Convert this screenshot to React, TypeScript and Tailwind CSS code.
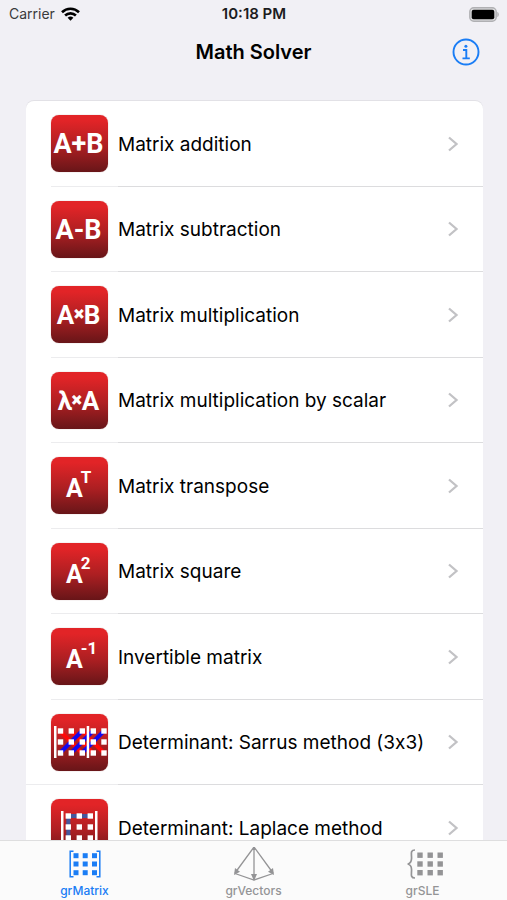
import type { ReactNode } from "react";

type Row = { label: string; art: ReactNode; fullDivider?: boolean };

const GLYPH = { fontFamily: "Roboto, sans-serif", fontWeight: 700, fill: "#fff" };

function Dots({ xs, ys, size }: { xs: number[]; ys: number[]; size: number }) {
  return (
    <>
      {ys.map((y) =>
        xs.map((x) => (
          <rect key={`${x}-${y}`} x={x - size / 2} y={y - size / 2} width={size} height={size} />
        )),
      )}
    </>
  );
}

function Operation({ left, sign, right, small }: { left: string; sign: string; right: string; small?: boolean }) {
  return (
    <text x="27.500" y="38" fontSize={small ? 26 : 27} textAnchor="middle" {...GLYPH}>
      {left}
      {small ? (
        <tspan fontSize="18" dy="-4" stroke="#fff" strokeWidth="0.8">{sign}</tspan>
      ) : (
        <tspan>{sign}</tspan>
      )}
      <tspan dy={small ? 4 : 0}>{right}</tspan>
    </text>
  );
}

function Power({ exponent }: { exponent: string }) {
  return (
    <text x="15" y="40" fontSize="25" {...GLYPH}>
      A
      <tspan dx="-2" dy="-14" fontSize="17">{exponent}</tspan>
    </text>
  );
}

function Sarrus() {
  return (
    <>
      <path d="M9 17l22 22M20 17l22 22M31 17l22 22" stroke="#ff0808" strokeWidth="4" />
      <path d="M9 39l22-22M20 39l22-22M31 39l22-22" stroke="#1408f0" strokeWidth="4" />
      <g fill="#fff">
        <rect x="3" y="12" width="2.5" height="32" />
        <rect x="35.7" y="12" width="2.5" height="32" />
        <Dots xs={[9.5, 20.3, 31.3, 42.3, 53]} ys={[17, 28, 39]} size={5.4} />
      </g>
    </>
  );
}

function Laplace() {
  return (
    <>
      <path d="M39 17H17.3V39" fill="none" stroke="#46579c" strokeWidth="4" />
      <g fill="#fff">
        <rect x="10" y="12" width="2.5" height="32" />
        <rect x="44" y="12" width="2.5" height="32" />
        <Dots xs={[17.3, 28.3, 39.3]} ys={[17, 28, 39]} size={5.4} />
      </g>
    </>
  );
}

const rows: Row[] = [
  { label: "Matrix addition", art: <Operation left="A" sign="+" right="B" /> },
  { label: "Matrix subtraction", art: <Operation left="A" sign="-" right="B" /> },
  { label: "Matrix multiplication", art: <Operation left="A" sign="×" right="B" small /> },
  { label: "Matrix multiplication by scalar", art: <Operation left="λ" sign="×" right="A" small /> },
  { label: "Matrix transpose", art: <Power exponent="T" /> },
  { label: "Matrix square", art: <Power exponent="2" /> },
  { label: "Invertible matrix", art: <Power exponent="-1" /> },
  { label: "Determinant: Sarrus method (3x3)", art: <Sarrus />, fullDivider: true },
  { label: "Determinant: Laplace method", art: <Laplace /> },
];

function StatusBar() {
  return (
    <div className="grid h-7 grid-cols-3 items-center pr-2 pl-[9px] text-sm">
      <div className="flex items-center gap-[6px] text-[#3a3a3c]">
        <span>Carrier</span>
        <svg width="19" height="14" viewBox="0 0 19 14" fill="none" stroke="#000" strokeWidth="2.6" aria-label="Wi-Fi">
          <path d="M1 5.2a12.2 12.2 0 0 1 17 0" />
          <path d="M4.1 8.5a7.8 7.8 0 0 1 10.8 0" />
          <path d="M9.5 13.8L6.6 10.8a4.2 4.2 0 0 1 5.8 0z" fill="#000" stroke="none" />
        </svg>
      </div>
      <span className="text-center text-[15px] font-semibold text-[#1c1c1e]">10:18 PM</span>
      <svg className="justify-self-end" width="30" height="15" viewBox="0 0 30 15" aria-label="Battery full">
        <rect x="0.8" y="0.8" width="26.4" height="13.4" rx="4" fill="#dcdcde" stroke="#b0b0b3" strokeWidth="1.4" />
        <rect x="2.7" y="2.7" width="22.6" height="9.6" rx="2" fill="#000" />
        <path d="M28.3 5c2 .6 2 4.4 0 5z" fill="#b0b0b3" />
      </svg>
    </div>
  );
}

function TitleBar() {
  return (
    <header className="grid h-12 grid-cols-[1fr_auto_1fr] items-center px-[27px]">
      <h1 className="col-start-2 text-xl font-semibold">Math Solver</h1>
      <button type="button" aria-label="Information" className="justify-self-end">
        <svg width="28" height="28" viewBox="0 0 28 28" fill="none" stroke="#1a7df5">
          <circle cx="14" cy="14" r="12.5" strokeWidth="1.9" />
          <path d="M11 12h3.3v8.2M10.5 20.4h7.3" strokeWidth="1.9" />
          <circle cx="13.9" cy="8.2" r="1.5" fill="#1a7df5" stroke="none" />
        </svg>
      </button>
    </header>
  );
}

function MatrixIcon() {
  return (
    <svg width="32" height="28" viewBox="0 0 32 28" fill="currentColor" aria-hidden="true">
      <path d="M4.5 1.2H1.2v25.6h3.3M27.5 1.2h3.3v25.6h-3.3" fill="none" stroke="currentColor" strokeWidth="1.5" />
      <Dots xs={[7, 16.2, 25.5]} ys={[5.7, 14, 22.7]} size={5} />
    </svg>
  );
}

function VectorsIcon() {
  return (
    <svg width="40" height="34" viewBox="0 0 40 34" fill="currentColor" aria-hidden="true">
      <path d="M20 0v33M20 0L1 26M20 0l19 26M1 26.5l19 6.5 19-6.5" fill="none" stroke="currentColor" strokeWidth="1.3" />
      <path d="M0 28l1-7 5 3.8zM40 28l-1-7-5 3.8zM20 34l-3-7h6zM20 0l-2 3h4z" />
    </svg>
  );
}

function SystemIcon() {
  return (
    <svg width="40" height="30" viewBox="-4 0 40 30" fill="currentColor" aria-hidden="true">
      <path d="M8 1C2.5 1 5 6 4.5 10c-.2 3-1.500 4.500-3.800 5 2.300.5 3.600 2 3.800 5 .5 4-2 9 3.500 9" fill="none" stroke="currentColor" strokeWidth="1.7" />
      <Dots xs={[13, 23.2, 33.2]} ys={[6.2, 15, 23.7]} size={5.4} />
    </svg>
  );
}

const tabs = [
  { label: "grMatrix", icon: <MatrixIcon />, active: true },
  { label: "grVectors", icon: <VectorsIcon />, active: false },
  { label: "grSLE", icon: <SystemIcon />, active: false },
];

export default function App() {
  return (
    <div className="flex h-screen flex-col bg-[#f1f0f5] font-['Inter',sans-serif] text-black">
      <StatusBar />
      <TitleBar />
      <main className="min-h-0 flex-1 overflow-y-auto pt-[25px] pr-6 pl-[26px] [scrollbar-width:none]">
        <ul className="overflow-hidden rounded-lg bg-white shadow-[0_-1px_0_#e2e1e6]">
          {rows.map((row) => (
            <li key={row.label} className="odd:h-[86px] even:h-[85px]">
              <button type="button" className="flex h-full w-full flex-col text-left">
                <span className="flex w-full flex-1 items-center pr-6 pl-[25px]">
                  <svg
                    width="57"
                    height="57"
                    viewBox="0 0 57 57"
                    aria-hidden="true"
                    className="shrink-0 rounded-lg bg-linear-to-b from-[#e22427] from-10% via-[#ad1f22] via-55% to-[#681518] shadow-[0_0_1px_#b08080]"
                  >
                    {row.art}
                  </svg>
                  <span className="ml-[10px] flex-1 pt-[3px] text-[19px] whitespace-nowrap [font-feature-settings:'calt'_0]">
                    {row.label}
                  </span>
                  <svg width="12" height="16" viewBox="0 0 12 16" fill="none" stroke="#c2c2c5" strokeWidth="2.3" aria-hidden="true">
                    <path d="M2 1.5L9.500 8 2 14.5" />
                  </svg>
                </span>
                <span className="flex h-px w-full">
                  <span className={row.fullDivider ? "w-[92px] bg-[#ececee]" : "ml-[25px] w-[67px] bg-[#ececee]"} />
                  <span className="flex-1 bg-[#dcdcde]" />
                </span>
              </button>
            </li>
          ))}
        </ul>
      </main>
      <nav className="grid h-[60px] shrink-0 grid-cols-3 border-t border-[#dededf] bg-[#fbfbfb]">
        {tabs.map((tab) => (
          <button
            key={tab.label}
            type="button"
            aria-current={tab.active ? "page" : undefined}
            className={`flex flex-col items-center text-xs font-medium ${tab.active ? "text-[#1a7df5]" : "text-[#949496]"}`}
          >
            <span className="flex h-[42px] items-center pt-1">{tab.icon}</span>
            {tab.label}
          </button>
        ))}
      </nav>
    </div>
  );
}
